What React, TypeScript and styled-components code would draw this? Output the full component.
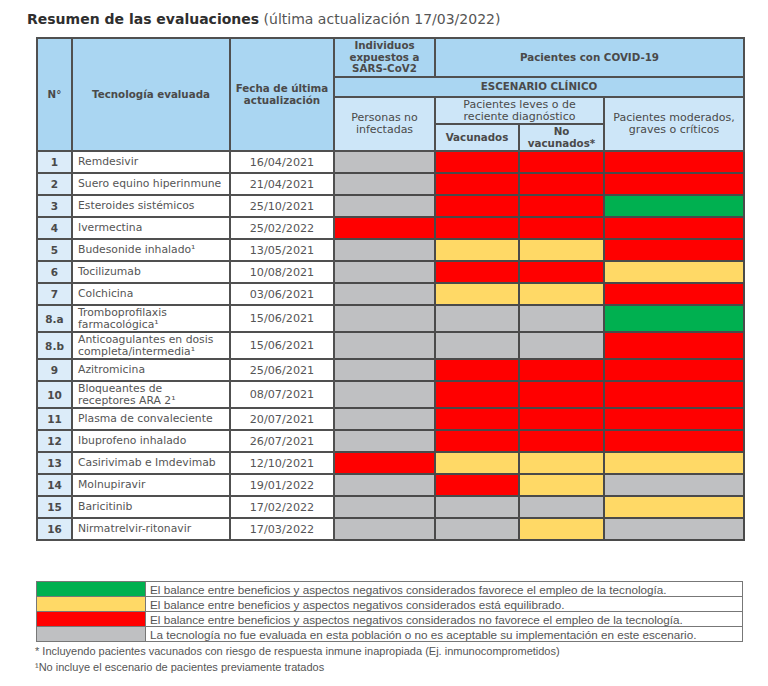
import React from "react";
import styled, { createGlobalStyle } from "styled-components";

type Tone = "r" | "y" | "g" | "n";

const toneColor: Record<Tone, string> = {
  r: "#ff0000",
  y: "#ffd966",
  g: "#00b050",
  n: "#bfc0c2",
};

const GlobalStyle = createGlobalStyle`
  html, body { margin: 0; padding: 0; background: #ffffff; }
  body { font-family: "DejaVu Sans", Verdana, sans-serif; color: #4d4d4d; }
`;

const Page = styled.div`
  width: 768px;
  height: 686px;
  box-sizing: border-box;
  padding: 10px 0 0 36px;
  overflow: hidden;
`;

const Title = styled.h1`
  margin: 0 0 0 -9px;
  font-size: 14px;
  line-height: 18px;
  font-weight: normal;
  color: #555;
  white-space: nowrap;
  b {
    font-weight: bold;
    color: #2e2e2e;
  }
`;

const Table = styled.table`
  margin-top: 9px;
  width: 707px;
  border-collapse: collapse;
  table-layout: fixed;
  border: 2px solid #505050;
`;

const HeadRow = styled.tr<{ $h: number }>`
  height: ${(p) => p.$h}px;
`;

const HeadCell = styled.th<{ $light?: boolean; $bold?: boolean }>`
  border: 2px solid #505050;
  background: ${(p) => (p.$light ? "#cde6f8" : "#aad6f2")};
  color: #4a4a4a;
  font-size: ${(p) => (p.$bold === false ? "11px" : "10.3px")};
  line-height: ${(p) => (p.$bold === false ? "12px" : "11.5px")};
  font-weight: ${(p) => (p.$bold === false ? "normal" : "bold")};
  text-align: center;
  vertical-align: middle;
  padding: 0;
  white-space: nowrap;
`;

const BodyRow = styled.tr<{ $tall?: boolean }>`
  height: ${(p) => (p.$tall ? 27 : 22)}px;
`;

const NumCell = styled.td`
  border: 2px solid #505050;
  background: #dcecf9;
  font-size: 10.5px;
  font-weight: bold;
  color: #4a4a4a;
  text-align: center;
  vertical-align: middle;
  padding: 0;
`;

const NameCell = styled.td`
  border: 2px solid #505050;
  background: #ffffff;
  font-size: 10.8px;
  line-height: 12px;
  color: #555;
  text-align: left;
  vertical-align: middle;
  padding: 0 0 0 5px;
  white-space: nowrap;
  overflow: hidden;
`;

const DateCell = styled.td`
  border: 2px solid #505050;
  background: #ffffff;
  font-size: 11.2px;
  color: #555;
  text-align: center;
  vertical-align: middle;
  padding: 0;
`;

const RatingCell = styled.td<{ $tone: Tone }>`
  border: 2px solid #4a4a4a;
  background: ${(p) => toneColor[p.$tone]};
  padding: 0;
`;

const Legend = styled.table`
  margin-top: 40px;
  width: 707px;
  border-collapse: collapse;
  table-layout: fixed;
  border: 1px solid #777;
`;

const LegendRow = styled.tr`
  height: 15px;
`;

const Swatch = styled.td<{ $tone: Tone }>`
  width: 108px;
  border: 1px solid #777;
  background: ${(p) => toneColor[p.$tone]};
  padding: 0;
`;

const LegendText = styled.td`
  border: 1px solid #777;
  font-family: "Liberation Sans", Arial, sans-serif;
  font-size: 11.7px;
  line-height: 13px;
  color: #555;
  padding: 0 0 0 4px;
  white-space: nowrap;
`;

const Notes = styled.div`
  margin-top: 1px;
  margin-left: -1px;
  font-family: "Liberation Sans", Arial, sans-serif;
  font-size: 11px;
  line-height: 16px;
  color: #555;
`;

type Row = {
  n: string;
  name: React.ReactNode;
  date: string;
  tones: Tone[];
  tall?: boolean;
};

const rows: Row[] = [
  { n: "1", name: "Remdesivir", date: "16/04/2021", tones: ["n", "r", "r", "r"] },
  { n: "2", name: "Suero equino hiperinmune", date: "21/04/2021", tones: ["n", "r", "r", "r"] },
  { n: "3", name: "Esteroides sistémicos", date: "25/10/2021", tones: ["n", "r", "r", "g"] },
  { n: "4", name: "Ivermectina", date: "25/02/2022", tones: ["r", "r", "r", "r"] },
  { n: "5", name: "Budesonide inhalado¹", date: "13/05/2021", tones: ["n", "y", "y", "r"] },
  { n: "6", name: "Tocilizumab", date: "10/08/2021", tones: ["n", "r", "r", "y"] },
  { n: "7", name: "Colchicina", date: "03/06/2021", tones: ["n", "y", "y", "r"] },
  {
    n: "8.a",
    name: (
      <>
        Tromboprofilaxis
        <br />
        farmacológica¹
      </>
    ),
    date: "15/06/2021",
    tones: ["n", "n", "n", "g"],
    tall: true,
  },
  {
    n: "8.b",
    name: (
      <>
        Anticoagulantes en dosis
        <br />
        completa/intermedia¹
      </>
    ),
    date: "15/06/2021",
    tones: ["n", "n", "n", "r"],
    tall: true,
  },
  { n: "9", name: "Azitromicina", date: "25/06/2021", tones: ["n", "r", "r", "r"] },
  {
    n: "10",
    name: (
      <>
        Bloqueantes de
        <br />
        receptores ARA 2¹
      </>
    ),
    date: "08/07/2021",
    tones: ["n", "r", "r", "r"],
    tall: true,
  },
  { n: "11", name: "Plasma de convaleciente", date: "20/07/2021", tones: ["n", "r", "r", "r"] },
  { n: "12", name: "Ibuprofeno inhalado", date: "26/07/2021", tones: ["n", "r", "r", "r"] },
  { n: "13", name: "Casirivimab e Imdevimab", date: "12/10/2021", tones: ["r", "y", "y", "y"] },
  { n: "14", name: "Molnupiravir", date: "19/01/2022", tones: ["n", "r", "y", "n"] },
  { n: "15", name: "Baricitinib", date: "17/02/2022", tones: ["n", "n", "n", "y"] },
  { n: "16", name: "Nirmatrelvir-ritonavir", date: "17/03/2022", tones: ["n", "n", "y", "n"] },
];

const legend: { tone: Tone; text: string }[] = [
  { tone: "g", text: "El balance entre beneficios y aspectos negativos considerados favorece el empleo de la tecnología." },
  { tone: "y", text: "El balance entre beneficios y aspectos negativos considerados está equilibrado." },
  { tone: "r", text: "El balance entre beneficios y aspectos negativos considerados no favorece el empleo de la tecnología." },
  { tone: "n", text: "La tecnología no fue evaluada en esta población o no es aceptable su implementación en este escenario." },
];

const colWidths = [35, 158, 104, 101, 84, 85, 140];

export default function App() {
  return (
    <>
      <GlobalStyle />
      <Page>
        <Title>
          <b>Resumen de las evaluaciones</b> (última actualización 17/03/2022)
        </Title>
        <Table>
          <colgroup>
            {colWidths.map((w, i) => (
              <col key={i} style={{ width: w }} />
            ))}
          </colgroup>
          <thead>
            <HeadRow $h={39}>
              <HeadCell rowSpan={4}>N°</HeadCell>
              <HeadCell rowSpan={4}>Tecnología evaluada</HeadCell>
              <HeadCell rowSpan={4}>
                Fecha de última
                <br />
                actualización
              </HeadCell>
              <HeadCell>
                Individuos
                <br />
                expuestos a<br />
                SARS-CoV2
              </HeadCell>
              <HeadCell colSpan={3}>Pacientes con COVID-19</HeadCell>
            </HeadRow>
            <HeadRow $h={20}>
              <HeadCell colSpan={4}>ESCENARIO CLÍNICO</HeadCell>
            </HeadRow>
            <HeadRow $h={27}>
              <HeadCell rowSpan={2} $light $bold={false}>
                Personas no
                <br />
                infectadas
              </HeadCell>
              <HeadCell colSpan={2} $light $bold={false}>
                Pacientes leves o de
                <br />
                reciente diagnóstico
              </HeadCell>
              <HeadCell rowSpan={2} $light $bold={false}>
                Pacientes moderados,
                <br />
                graves o críticos
              </HeadCell>
            </HeadRow>
            <HeadRow $h={27}>
              <HeadCell $light>Vacunados</HeadCell>
              <HeadCell $light>
                No
                <br />
                vacunados*
              </HeadCell>
            </HeadRow>
          </thead>
          <tbody>
            {rows.map((r) => (
              <BodyRow key={r.n} $tall={r.tall}>
                <NumCell>{r.n}</NumCell>
                <NameCell>{r.name}</NameCell>
                <DateCell>{r.date}</DateCell>
                {r.tones.map((t, i) => (
                  <RatingCell key={i} $tone={t} />
                ))}
              </BodyRow>
            ))}
          </tbody>
        </Table>
        <Legend>
          <tbody>
            {legend.map((l) => (
              <LegendRow key={l.tone}>
                <Swatch $tone={l.tone} />
                <LegendText>{l.text}</LegendText>
              </LegendRow>
            ))}
          </tbody>
        </Legend>
        <Notes>
          <div>* Incluyendo pacientes vacunados con riesgo de respuesta inmune inapropiada (Ej. inmunocomprometidos)</div>
          <div>¹No incluye el escenario de pacientes previamente tratados</div>
        </Notes>
      </Page>
    </>
  );
}
